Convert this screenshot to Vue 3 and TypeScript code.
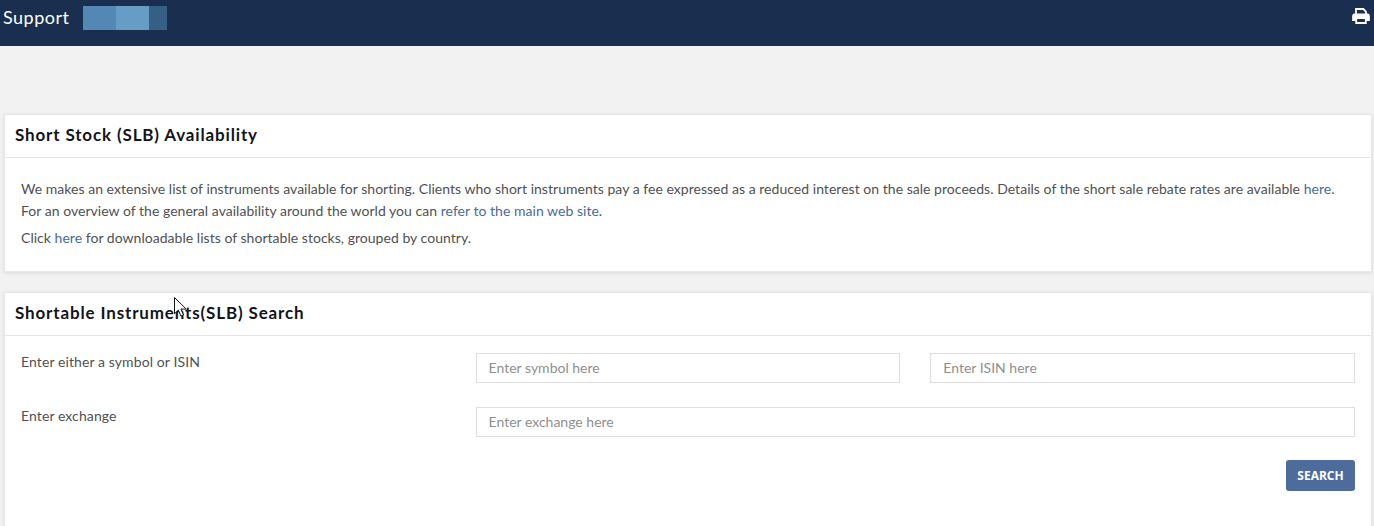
<script setup lang="ts">
const blocks: { w: number; c: string }[] = [
  { w: 33, c: '#5288b3' },
  { w: 33, c: '#669dc4' },
  { w: 18, c: '#365f85' },
];
</script>

<template>
  <div class="page">
    <header class="topbar">
      <span class="brand">Support</span>
      <div class="redact">
        <i v-for="(b, i) in blocks" :key="i" :style="{ width: b.w + 'px', background: b.c }"></i>
      </div>
      <svg class="printer" width="18" height="16" viewBox="0 0 18 16" fill="none">
        <path d="M4 7V1h7.4L14 3.8V7" stroke="#fff" stroke-width="1.8" />
        <path d="M3.6 12.4H.8V8a1.8 1.8 0 0 1 1.8-1.8h12.8A1.8 1.8 0 0 1 17.2 8v4.4h-2.8" fill="#fff" stroke="#fff" stroke-width="1.2" />
        <path d="M4.2 10h9.6v5H4.2z" fill="#1a2f4f" stroke="#fff" stroke-width="1.8" />
      </svg>
    </header>

    <main class="content">
      <section class="card first">
        <h2 class="card-title">Short Stock (SLB) Availability</h2>
        <div class="card-body info">
          <p>We makes an extensive list of instruments available for shorting. Clients who short instruments pay a fee expressed as a reduced interest on the sale proceeds. Details of the short sale rebate rates are available <a>here</a>.<br />For an overview of the general availability around the world you can <a>refer to the main web site</a>.</p>
          <p>Click <a>here</a> for downloadable lists of shortable stocks, grouped by country.</p>
        </div>
      </section>

      <section class="card second">
        <h2 class="card-title">Shortable Instruments(SLB) Search</h2>
        <div class="card-body form">
          <label>Enter either a symbol or ISIN</label>
          <div class="fields">
            <input placeholder="Enter symbol here" />
            <input placeholder="Enter ISIN here" />
          </div>
          <label>Enter exchange</label>
          <div class="fields">
            <input placeholder="Enter exchange here" />
          </div>
          <div class="actions"><button type="button">SEARCH</button></div>
        </div>
      </section>
    </main>

    <svg class="cursor" width="16" height="22" viewBox="0 0 16 22">
      <path d="M.5.5v16.2l3.8-3.6 2.6 6 2.6-1.1-2.6-5.9h5.4z" fill="#fff" stroke="#111" stroke-width="1" />
    </svg>
  </div>
</template>

<style>
html, body { margin: 0; background: #f2f2f2; }
</style>

<style scoped>
.page {
  position: relative;
  height: 526px;
  overflow: hidden;
  background: #f2f2f2;
  font-family: "Lato", "Liberation Sans", sans-serif;
  color: #505055;
}
.topbar {
  height: 46px;
  background: #1a2f4f;
  display: flex;
  align-items: flex-start;
  padding: 0 4px 0 3px;
  box-sizing: border-box;
}
.brand {
  color: #fff;
  font-size: 18px;
  line-height: 35px;
  letter-spacing: 0.5px;
}
.redact {
  display: flex;
  height: 24px;
  margin: 6px 0 0 13px;
}
.printer { margin: 8px 0 0 auto; }
.content {
  padding: 68px 2px 0 4px;
  display: flex;
  flex-direction: column;
  gap: 20px;
}
.card {
  background: #fff;
  border: 1px solid #e8e8e8;
  box-shadow: 0 1px 4px rgba(0, 0, 0, 0.1);
}
.card-title {
  margin: 0;
  height: 42px;
  padding: 0 10px;
  font-size: 17px;
  font-weight: 700;
  line-height: 40px;
  letter-spacing: 0.85px;
  color: #14141a;
  border-bottom: 1px solid #e6e6e6;
}
.card-body { font-size: 14px; }
.info {
  height: 113px;
  padding: 20px 16px 0;
  box-sizing: border-box;
  letter-spacing: 0.03px;
}
.info p { margin: 0 0 5px; line-height: 22px; }
.info a { color: #4a6a99; }
.form {
  display: grid;
  grid-template-columns: 454.6px 1fr;
  grid-auto-rows: min-content;
  row-gap: 24px;
  padding: 17px 16px 60px 16px;
}
.form label { line-height: 20px; letter-spacing: 0.1px; margin-top: -1px; }
.fields { display: flex; gap: 30px; }
input {
  flex: 1;
  min-width: 0;
  height: 30px;
  box-sizing: border-box;
  border: 1px solid #dedede;
  background: #fff;
  padding: 0 12px 2px;
  font: inherit;
  font-size: 14px;
  outline: none;
}
input::placeholder { color: #8f8f8f; opacity: 1; }
.actions { grid-column: 1 / -1; display: flex; justify-content: flex-end; margin-top: -1px; }
button {
  width: 69px;
  height: 31px;
  border: 0;
  border-radius: 3px;
  background: #4d6c9b;
  color: #fff;
  font-family: "Open Sans", "Liberation Sans", sans-serif;
  font-size: 12px;
  font-weight: 700;
}
.cursor { position: absolute; left: 174px; top: 297px; }
</style>
